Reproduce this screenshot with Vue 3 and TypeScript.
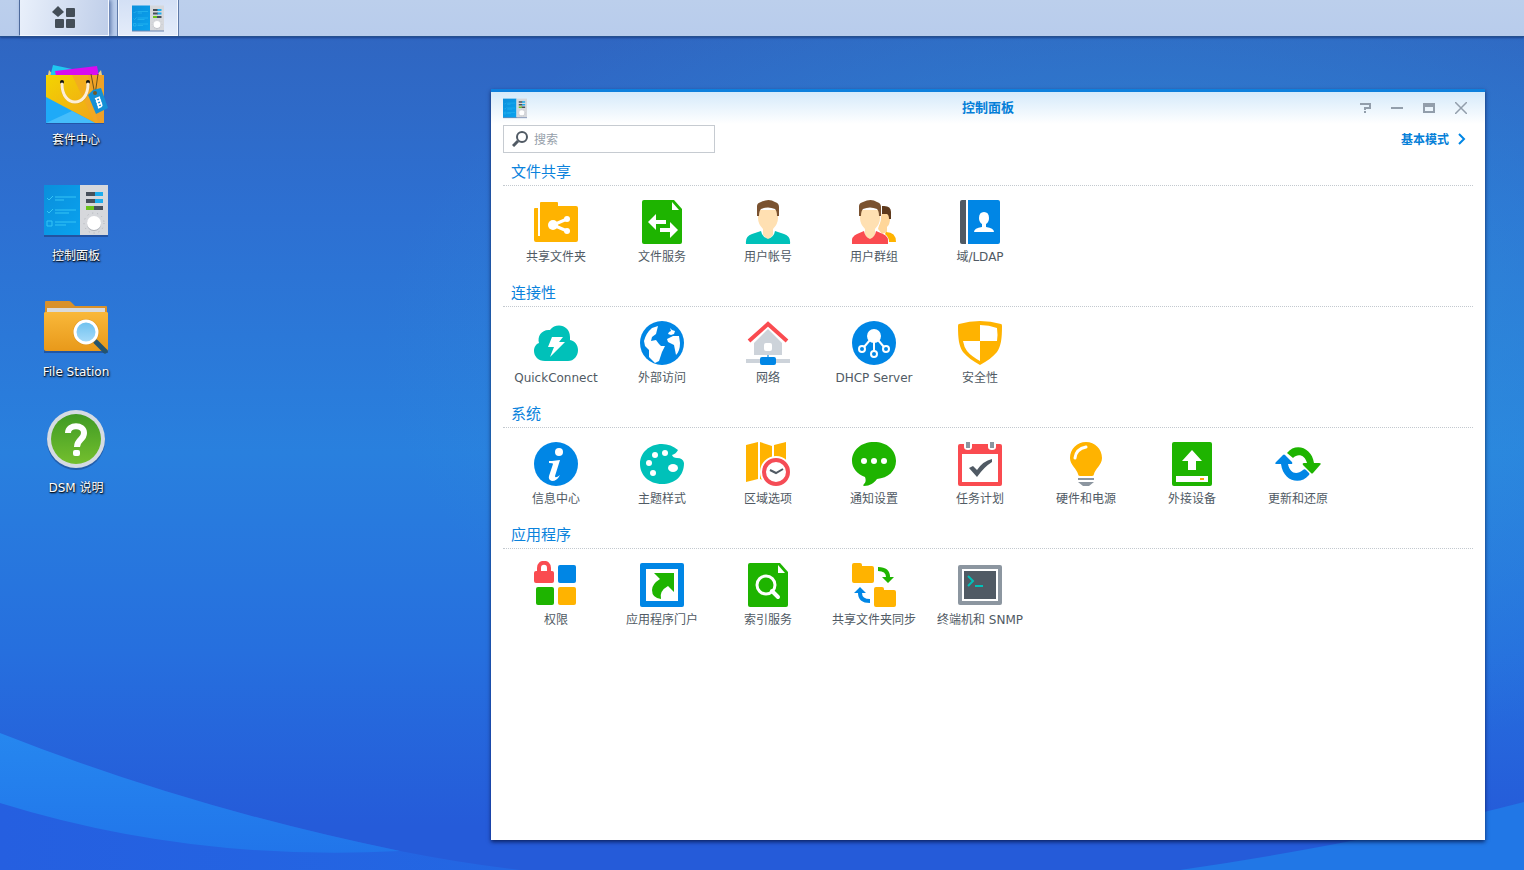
<script setup lang="ts">
import { ref } from 'vue'

interface Entry {
  icon: string
  label: string
}

interface Section {
  title: string
  items: Entry[]
}

const query = ref('')

const shortcuts: Entry[] = [
  { icon: 'bag', label: '套件中心' },
  { icon: 'panel', label: '控制面板' },
  { icon: 'files', label: 'File Station' },
  { icon: 'help', label: 'DSM 说明' },
]

const sections: Section[] = [
  {
    title: '文件共享',
    items: [
      { icon: 'share', label: '共享文件夹' },
      { icon: 'fileservice', label: '文件服务' },
      { icon: 'user', label: '用户帐号' },
      { icon: 'group', label: '用户群组' },
      { icon: 'ldap', label: '域/LDAP' },
    ],
  },
  {
    title: '连接性',
    items: [
      { icon: 'quickconnect', label: 'QuickConnect' },
      { icon: 'globe', label: '外部访问' },
      { icon: 'network', label: '网络' },
      { icon: 'dhcp', label: 'DHCP Server' },
      { icon: 'shield', label: '安全性' },
    ],
  },
  {
    title: '系统',
    items: [
      { icon: 'info', label: '信息中心' },
      { icon: 'palette', label: '主题样式' },
      { icon: 'region', label: '区域选项' },
      { icon: 'chat', label: '通知设置' },
      { icon: 'calendar', label: '任务计划' },
      { icon: 'bulb', label: '硬件和电源' },
      { icon: 'external', label: '外接设备' },
      { icon: 'update', label: '更新和还原' },
    ],
  },
  {
    title: '应用程序',
    items: [
      { icon: 'privilege', label: '权限' },
      { icon: 'portal', label: '应用程序门户' },
      { icon: 'index', label: '索引服务' },
      { icon: 'sync', label: '共享文件夹同步' },
      { icon: 'terminal', label: '终端机和 SNMP' },
    ],
  },
]
</script>

<template>
  <div class="desktop">
    <svg class="sprite" aria-hidden="true">
      <defs>
        <linearGradient id="g-bag" x1="0" y1="0" x2="1" y2="1">
          <stop offset="0" stop-color="#f3d400" />
          <stop offset="1" stop-color="#f0a01c" />
        </linearGradient>
        <linearGradient id="g-folder" x1="0" y1="0" x2="0" y2="1">
          <stop offset="0" stop-color="#f9b83a" />
          <stop offset="1" stop-color="#e8991a" />
        </linearGradient>
        <linearGradient id="g-lens" x1="0" y1="0" x2="0" y2="1">
          <stop offset="0" stop-color="#6cc0ee" />
          <stop offset="1" stop-color="#a9dcfa" />
        </linearGradient>
        <linearGradient id="g-help" x1="0" y1="0" x2="0" y2="1">
          <stop offset="0" stop-color="#3f9a24" />
          <stop offset="1" stop-color="#74bf2e" />
        </linearGradient>
        <linearGradient id="g-panel" x1="0" y1="0" x2="1" y2="1">
          <stop offset="0" stop-color="#0a8fdc" />
          <stop offset="1" stop-color="#0aa2ee" />
        </linearGradient>
      </defs>

      <symbol id="i-bag" viewBox="0 0 64 64">
        <path d="M4 13l1-5 4 5zM53 13l4-5 1 5z" fill="#e9cf86" />
        <path d="M9 3l19 4 8 8H6z" fill="#1fc8f0" />
        <path d="M11 9l42-5 2 10H12z" fill="#d80cf0" />
        <rect x="2" y="60" width="58" height="2" fill="#1a3f86" opacity=".5" />
        <path d="M2 13h58v48H2z" fill="url(#g-bag)" />
        <path d="M28 13h32v48h-9z" fill="#f2a725" opacity=".75" />
        <path d="M44 13h16v48h-6z" fill="#ee9d2c" opacity=".6" />
        <path d="M2 35l49 26H2z" fill="#1eaaf8" />
        <path d="M2 61l26-12 23 12z" fill="#45bdfb" />
        <circle cx="18" cy="20" r="2" fill="#111" />
        <circle cx="44" cy="20" r="2" fill="#111" />
        <path d="M18 23c0 22 26 24 26 0" fill="none" stroke="#b98314" stroke-width="3" opacity=".5" />
        <path d="M18 22c0 24 26 24 26 0" fill="none" stroke="#fdeed6" stroke-width="3" stroke-linecap="round" />
        <path d="M47 12l4 21M54 12l-3 21" fill="none" stroke="#69531c" />
        <path d="M44 33l5-5 8-2 7 20-12 6z" fill="#1590d6" />
        <circle cx="51" cy="31" r="2" fill="#725a2a" />
        <path d="M51 37l5-2M52 40l5-2M53 43l5-2M54 46l4-2M52 36l3 10M55 35l3 9" stroke="#fff" stroke-width="1.5" />
      </symbol>

      <symbol id="i-panel" viewBox="0 0 64 64">
        <rect y="56" width="64" height="3" fill="#1c3f80" opacity=".6" />
        <rect y="7" width="36" height="50" fill="url(#g-panel)" />
        <rect x="36" y="7" width="28" height="50" fill="#d6d8dc" />
        <path d="M3 20l2 2 4-4M3 33l2 2 4-4M3 43h5v5H3zM11 19h21M11 22h9M11 32h21M11 35h14M11 44h21M11 47h11" fill="none" stroke="#35c4f5" />
        <path d="M42 14h10v4H42zM42 21h10v4H42zM49 28h10v4H49z" fill="#47505a" />
        <path d="M51 14h8v4h-8zM51 21h8v4h-8z" fill="#1cacec" />
        <rect x="42" y="28" width="8" height="4" fill="#6cc41b" />
        <circle cx="50" cy="45" r="10" fill="none" stroke="#aeb2b8" stroke-dasharray="1 4" />
        <circle cx="50" cy="46" r="7" fill="#aaaeb5" />
        <circle cx="50" cy="45" r="7" fill="#fff" />
      </symbol>

      <symbol id="i-files" viewBox="0 0 64 64">
        <rect y="56" width="64" height="3" fill="#1c3f80" opacity=".6" />
        <path d="M1 8q0-1 1-1h23q1 0 2 1l4 4h31q1 0 1 1v20H1z" fill="#d9912a" />
        <path d="M3 14h58v6H3z" fill="#eef0f2" />
        <path d="M3 15h58M3 17h58" stroke="#c4c4c4" />
        <path d="M0 19q0-1 2-1h60q2 0 2 1v36q0 2-2 2H2q-2 0-2-2z" fill="url(#g-folder)" />
        <path d="M52 48l9 9" stroke="#24546f" stroke-width="5" stroke-linecap="round" />
        <circle cx="42" cy="38" r="13" fill="#cf8a1b" opacity=".5" />
        <circle cx="42" cy="38" r="11" fill="url(#g-lens)" stroke="#fff" stroke-width="3" />
      </symbol>

      <symbol id="i-help" viewBox="0 0 64 64">
        <circle cx="32" cy="31" r="29" fill="#1b3d7c" opacity=".5" />
        <circle cx="32" cy="29" r="29" fill="#d5dbe3" />
        <circle cx="32" cy="29" r="25" fill="url(#g-help)" />
        <path d="M24 23c0-9 16-9 16 0 0 7-7 6-7 14" fill="none" stroke="#fff" stroke-width="6" />
        <rect x="29" y="40" width="7" height="6" rx="2" fill="#fff" />
      </symbol>

      <symbol id="i-share" viewBox="0 0 48 48">
        <path d="M2 11q0-1 1-1h3v28h2V5q0-1 1-1h16q1 0 1 1v3h18q2 0 2 2v32q0 2-2 2H4q-2 0-2-2z" fill="#ffb300" />
        <path d="M35 21l-14 6 14 6" fill="none" stroke="#fff" stroke-width="3" />
        <circle cx="21" cy="27" r="5" fill="#fff" />
        <circle cx="35" cy="21" r="3" fill="#fff" />
        <circle cx="35" cy="33" r="3" fill="#fff" />
      </symbol>

      <symbol id="i-fileservice" viewBox="0 0 48 48">
        <path d="M6 2h30l8 9v33q0 2-2 2H6q-2 0-2-2V4q0-2 2-2z" fill="#1eb400" />
        <path d="M34 4v8h7zM10 24l8-8v6h10v4H18v6zM40 32l-8-8v6H22v4h10v6z" fill="#fff" />
      </symbol>

      <symbol id="i-user" viewBox="0 0 48 48">
        <path d="M14 12h20v8q0 6-5 11v6l-5 5-5-5v-6q-5-5-5-11z" fill="#ffe0b2" />
        <path d="M13 18V8q0-3 4-4 8-4 14 0 4 1 4 5v9h-2q0-5-2-7-7-3-14 0-2 2-2 7z" fill="#7a5230" />
        <path d="M2 46q-1-8 6-10l9-3q1 6 7 8 6-2 7-8l9 3q7 2 6 10z" fill="#00c1b9" />
      </symbol>

      <symbol id="i-group" viewBox="0 0 48 48">
        <path d="M32 15h8v6q0 5-3 8v5l-5 2-4-5z" fill="#ffd699" />
        <path d="M32 8q9-1 9 6v7h-2q0-4-2-5h-5z" fill="#5f3a1c" />
        <path d="M36 34q10 0 10 10h-7q0-5-4-8z" fill="#ffb300" />
        <path d="M10 12h20v8q0 6-5 11v6l-5 5-5-5v-6q-5-5-5-11z" fill="#ffe0b2" stroke="#fff" stroke-width="2" paint-order="stroke" />
        <path d="M9 18V8q0-3 4-4 8-4 14 0 4 1 4 5v9h-2q0-5-2-7-7-3-14 0-2 2-2 7z" fill="#7a5230" />
        <path d="M2 46q-1-8 5-10l7-3q1 6 6 8 5-2 6-8l7 3q6 2 5 10z" fill="#fa4b50" />
      </symbol>

      <symbol id="i-ldap" viewBox="0 0 48 48">
        <path d="M6 2h4v44H6q-2 0-2-2V4q0-2 2-2z" fill="#505a64" />
        <path d="M12 2h30q2 0 2 2v40q0 2-2 2H12z" fill="#0086e5" />
        <path d="M28 14q5 0 5 6 0 4-3 6v3q8 1 8 5H18q0-4 8-5v-3q-3-2-3-6 0-6 5-6z" fill="#fff" />
      </symbol>

      <symbol id="i-quickconnect" viewBox="0 0 48 48">
        <path d="M13 42C6 42 2 37 2 32c0-4 2-7 5-8-2-7 3-14 11-13 6-8 20-5 20 7v3c5 1 8 5 8 10 0 6-4 11-10 11z" fill="#00c1b9" />
        <path d="M20 18h11l-4 5h6L18 38l4-10h-6z" fill="#fff" />
      </symbol>

      <symbol id="i-globe" viewBox="0 0 48 48">
        <circle cx="24" cy="24" r="22" fill="#0086e5" />
        <path d="M20 7l-1 4-1 4-4 3-1 4 5-1 3 4 2 2h4l-3 6-3 9-4 2-6-6v-7l-4-4-1-5q2-8 8-13zM32 9l2 2 3 1-1 3-3 1-3-1 1-2 2-1zM29 20l6-3 6 0 1 7q0 8-4 12l-2-10-6-3zM28 7h2M31 7h2" fill="#fff" />
      </symbol>

      <symbol id="i-network" viewBox="0 0 48 48">
        <path d="M24 10l14 14v12H10V24z" fill="#cdd3da" />
        <path d="M5 22L24 5l19 17" fill="none" stroke="#fa4b50" stroke-width="4" />
        <rect x="20" y="24" width="8" height="8" rx="2" fill="#fff" />
        <path d="M2 40h44v4H2z" fill="#cdd3da" />
        <path d="M23 36h2v3h-2z" fill="#6cb9ef" />
        <rect x="16" y="38" width="16" height="8" rx="2" fill="#0086e5" />
      </symbol>

      <symbol id="i-dhcp" viewBox="0 0 48 48">
        <circle cx="24" cy="24" r="22" fill="#0086e5" />
        <path d="M20 21l-6 7M24 22v10M28 21l6 7" stroke="#fff" stroke-width="2" />
        <circle cx="24" cy="17" r="7" fill="#fff" />
        <g fill="none" stroke="#fff" stroke-width="2">
          <circle cx="12" cy="30" r="3" />
          <circle cx="24" cy="35" r="3" />
          <circle cx="36" cy="30" r="3" />
        </g>
      </symbol>

      <symbol id="i-shield" viewBox="0 0 48 48">
        <path d="M3 5q21-6 42 0 1 0 1 2c0 13-1 20-5 26-4 5-10 9-17 13-7-4-13-8-17-13C3 27 2 20 2 7q0-2 1-2z" fill="#ffb300" />
        <path d="M24 6q9 0 17 3 1 7 0 13H24zM24 22v20q-9-5-13-10-3-4-4-10z" fill="#fff" />
      </symbol>

      <symbol id="i-info" viewBox="0 0 48 48">
        <circle cx="24" cy="24" r="22" fill="#0086e5" />
        <circle cx="27" cy="12" r="4" fill="#fff" />
        <path d="M17 21h3l8-1-5 16q0 3 5-1-3 6-8 6-4-1-3-5l4-12q0-1-4-1z" fill="#fff" />
      </symbol>

      <symbol id="i-palette" viewBox="0 0 48 48">
        <path d="M24 4q9 0 16 6-2 4-6 5 1 3 5 3 6 0 7 5C46 36 37 44 24 44 11 44 2 35 2 24S11 4 24 4z" fill="#00c1b9" />
        <g fill="#fff">
          <circle cx="17" cy="15" r="3" />
          <circle cx="27" cy="13" r="3" />
          <circle cx="11" cy="23" r="3" />
          <circle cx="15" cy="33" r="3" />
          <ellipse cx="35" cy="28" rx="5" ry="4" />
        </g>
      </symbol>

      <symbol id="i-region" viewBox="0 0 48 48">
        <path d="M2 5l12-3v37L2 42zM16 2l12 4v37l-12-4zM30 5l12-3v36l-12 4z" fill="#ffb300" />
        <circle cx="32" cy="32" r="16" fill="#fff" />
        <circle cx="32" cy="32" r="12" fill="#fff" stroke="#f54c56" stroke-width="4" />
        <path d="M26 30l6 3 7-4" fill="none" stroke="#505a64" stroke-width="2" />
      </symbol>

      <symbol id="i-chat" viewBox="0 0 48 48">
        <path d="M24 2c13 0 22 8 22 19 0 10-8 17-19 18-3 4-7 7-13 7-1 0-1-1 0-2 2-2 2-4 1-7C7 34 2 28 2 21 2 10 11 2 24 2z" fill="#1eb400" />
        <g fill="#fff">
          <circle cx="14" cy="21" r="3" />
          <circle cx="24" cy="21" r="3" />
          <circle cx="34" cy="21" r="3" />
        </g>
      </symbol>

      <symbol id="i-calendar" viewBox="0 0 48 48">
        <rect x="2" y="4" width="44" height="42" rx="2" fill="#fa4b50" />
        <path d="M6 14h36v28H6zM8 2h8v5q0 3-4 3t-4-3zM32 2h8v5q0 3-4 3t-4-3z" fill="#fff" />
        <path d="M10 2h4v6h-4zM34 2h4v6h-4z" fill="#8c96a0" />
        <path d="M13 28l4-2 4 4q6-9 15-11v3q-8 5-15 15z" fill="#505a64" />
      </symbol>

      <symbol id="i-bulb" viewBox="0 0 48 48">
        <path d="M24 2c9 0 16 7 16 16 0 7-7 11-8 16q0 2-2 2H18q-2 0-2-2C15 29 8 25 8 18 8 9 15 2 24 2z" fill="#ffb300" />
        <path d="M13 18q1-9 11-11" fill="none" stroke="#fff" stroke-width="3" stroke-linecap="round" />
        <path d="M16 38h16v2H16zM16 42h16l-5 4h-6z" fill="#8c96a0" />
      </symbol>

      <symbol id="i-external" viewBox="0 0 48 48">
        <rect x="4" y="2" width="40" height="44" rx="2" fill="#1eb400" />
        <path d="M24 10l10 11h-6v9h-8v-9h-6zM8 36h32v6H8z" fill="#fff" />
        <rect x="32" y="38" width="4" height="2" fill="#ffa800" />
      </symbol>

      <symbol id="i-update" viewBox="0 0 48 48">
        <path d="M13 13C22 2 38 8 40 23h5q3 0 1 2l-7 8q-1 1-2 0l-8-8q-1-2 1-2h3c-2-8-9-10-14-5z" fill="#1eb400" />
        <path d="M35 35C26 46 9 41 7 24H3q-3 0-1-2l7-7q1-1 2 0l7 7q1 2-1 2h-3c2 10 9 11 15 6 1-1 2-1 3 0l3 3q1 1 0 2z" fill="#0086e5" />
      </symbol>

      <symbol id="i-privilege" viewBox="0 0 48 48">
        <path d="M7 12V7c0-7 10-7 10 0v5" fill="none" stroke="#fa4b50" stroke-width="4" />
        <rect x="2" y="10" width="20" height="12" rx="2" fill="#fa4b50" />
        <rect x="26" y="4" width="18" height="18" rx="2" fill="#0086e5" />
        <rect x="4" y="26" width="18" height="18" rx="2" fill="#1eb400" />
        <rect x="26" y="26" width="18" height="18" rx="2" fill="#ffb300" />
      </symbol>

      <symbol id="i-portal" viewBox="0 0 48 48">
        <rect x="2" y="2" width="44" height="44" rx="2" fill="#0086e5" />
        <path d="M8 8h32v32H8z" fill="#fff" />
        <path d="M16 12h20v19l-6-6q-9 5-7 13-9-1-9-9 0-6 8-11z" fill="#1eb400" />
      </symbol>

      <symbol id="i-index" viewBox="0 0 48 48">
        <path d="M6 2h30l8 9v33q0 2-2 2H6q-2 0-2-2V4q0-2 2-2z" fill="#1eb400" />
        <path d="M34 4v8h7z" fill="#fff" />
        <circle cx="22" cy="24" r="9" fill="none" stroke="#fff" stroke-width="3" />
        <path d="M28 30l6 6" stroke="#fff" stroke-width="4" stroke-linecap="round" />
      </symbol>

      <symbol id="i-sync" viewBox="0 0 48 48">
        <path d="M2 4q0-2 2-2h6q2 0 2 2v1h10q2 0 2 2v13q0 2-2 2H4q-2 0-2-2zM24 28q0-2 2-2h6q2 0 2 2v1h10q2 0 2 2v13q0 2-2 2H26q-2 0-2-2z" fill="#ffb300" />
        <path d="M28 6q12 0 12 10h4l-6 6-6-6h4q0-6-8-6z" fill="#1eb400" />
        <path d="M20 42q-12 0-12-10H4l6-6 6 6h-4q0 6 8 6z" fill="#0086e5" />
      </symbol>

      <symbol id="i-terminal" viewBox="0 0 48 48">
        <rect x="2" y="4" width="44" height="40" rx="2" fill="#8c96a0" />
        <path d="M6 8h36v32H6z" fill="#fff" />
        <path d="M8 10h32v28H8z" fill="#505a64" />
        <path d="M12 15l5 5-5 5M19 25h8" fill="none" stroke="#00c1b9" stroke-width="2" />
      </symbol>
    </svg>

    <svg class="wallpaper" viewBox="0 0 1524 870" preserveAspectRatio="none" aria-hidden="true">
      <defs>
        <linearGradient id="sky" x1="0" y1="0" x2="0" y2="1">
          <stop offset="0" stop-color="#3064be" />
          <stop offset=".25" stop-color="#2d70d2" />
          <stop offset=".52" stop-color="#2980de" />
          <stop offset=".75" stop-color="#266fde" />
          <stop offset=".95" stop-color="#255bd9" />
        </linearGradient>
        <radialGradient id="glow" cx=".75" cy=".4" r=".5">
          <stop offset="0" stop-color="#2f9bdc" stop-opacity=".6" />
          <stop offset="1" stop-color="#2f9bdc" stop-opacity="0" />
        </radialGradient>
        <linearGradient id="wave" x1="0" y1="0" x2="0" y2="1">
          <stop offset="0" stop-color="#2687ef" />
          <stop offset="1" stop-color="#2175ea" />
        </linearGradient>
        <linearGradient id="base" x1="0" y1="0" x2="1" y2="0">
          <stop offset="0" stop-color="#255fe0" />
          <stop offset="1" stop-color="#2367e3" />
        </linearGradient>
      </defs>
      <rect width="1524" height="870" fill="url(#sky)" />
      <rect width="1524" height="870" fill="url(#glow)" />
      <path d="M0 733Q190 808 400 851Q460 863 520 870H0z" fill="url(#base)" />
      <path d="M0 733Q190 808 400 851Q190 862 0 803z" fill="url(#wave)" />
      <path d="M1180 870Q1370 842 1524 802V870z" fill="#2177e6" />
    </svg>

    <header class="taskbar">
      <button class="task menu" type="button" aria-label="主菜单">
        <svg width="24" height="24" viewBox="0 0 24 24" fill="#444e58">
          <path d="M6 0l6 6-6 5-6-5z" />
          <rect x="14" y="2" width="9" height="9" rx="1" />
          <rect x="3" y="13" width="9" height="9" rx="1" />
          <rect x="14" y="13" width="9" height="9" rx="1" />
        </svg>
      </button>
      <button class="task app" type="button" aria-label="控制面板">
        <svg width="32" height="32"><use href="#i-panel" /></svg>
      </button>
    </header>

    <nav class="shortcuts">
      <button v-for="s in shortcuts" :key="s.icon" class="shortcut" type="button">
        <svg width="64" height="64"><use :href="'#i-' + s.icon" /></svg>
        <span>{{ s.label }}</span>
      </button>
    </nav>

    <main class="window">
      <div class="titlebar">
        <svg width="24" height="24"><use href="#i-panel" /></svg>
        <h1>控制面板</h1>
        <div class="controls">
          <button type="button" aria-label="帮助">
            <svg viewBox="0 0 12 12"><path d="M1 2h10v4H6v2M6 9v2" /></svg>
          </button>
          <button type="button" aria-label="最小化">
            <svg viewBox="0 0 12 12"><path d="M0 6h12" /></svg>
          </button>
          <button type="button" aria-label="最大化">
            <svg viewBox="0 0 12 12">
              <path class="solid" fill-rule="evenodd" d="M0 1h12v10H0zM2 5v4h8V5z" />
            </svg>
          </button>
          <button type="button" aria-label="关闭">
            <svg class="thin" viewBox="0 0 12 12"><path d="M0 0l12 12M12 0L0 12" /></svg>
          </button>
        </div>
      </div>

      <div class="toolbar">
        <label class="search">
          <svg width="16" height="16" viewBox="0 0 16 16" aria-hidden="true">
            <circle cx="10" cy="6" r="5" fill="none" stroke="#505a64" stroke-width="2" />
            <path d="M6 10l-5 5" stroke="#505a64" stroke-width="3" />
          </svg>
          <input v-model="query" type="text" placeholder="搜索" aria-label="搜索" />
        </label>
        <a class="mode" href="#">
          基本模式
          <svg width="8" height="12" viewBox="0 0 8 12" aria-hidden="true">
            <path d="M1 1l5 5-5 5" fill="none" stroke="#0086e5" stroke-width="2" />
          </svg>
        </a>
      </div>

      <section v-for="sec in sections" :key="sec.title">
        <h2>{{ sec.title }}</h2>
        <div class="items">
          <button v-for="it in sec.items" :key="it.icon" class="item" type="button">
            <svg width="48" height="48"><use :href="'#i-' + it.icon" /></svg>
            <span>{{ it.label }}</span>
          </button>
        </div>
      </section>
    </main>
  </div>
</template>

<style>
html,
body {
  margin: 0;
  height: 100%;
  overflow: hidden;
}
</style>

<style scoped>
.desktop {
  position: relative;
  height: 100vh;
  overflow: hidden;
  background: #2b70d4;
  font-family: 'DejaVu Sans', 'Noto Sans CJK SC', sans-serif;
  font-size: 12px;
}

button {
  margin: 0;
  padding: 0;
  border: 0;
  background: none;
  font: inherit;
  color: inherit;
  cursor: pointer;
}

svg {
  display: block;
}

.sprite {
  position: absolute;
  width: 0;
  height: 0;
}

.wallpaper {
  position: absolute;
  inset: 0;
  width: 100%;
  height: 100%;
}

.taskbar {
  position: relative;
  display: flex;
  gap: 9px;
  box-sizing: border-box;
  height: 37px;
  padding-left: 19px;
  background: linear-gradient(#bccfec, #b8ccec);
  border-bottom: 1px solid #24508f;
  box-shadow: 0 1px 2px rgba(10, 30, 90, 0.5);
}

.task {
  display: flex;
  align-items: center;
  justify-content: center;
  box-sizing: border-box;
  border: 1px solid #f4f8ff;
  border-top: 0;
  background: linear-gradient(100deg, #e9f0fb, #bfcee9);
}

.task.menu {
  width: 90px;
  border-left-color: #4d6a9c;
  box-shadow: 2px 0 4px rgba(50, 80, 140, 0.7);
}

.task.app {
  width: 60px;
  background: linear-gradient(#d3e0f5, #e4ecfa);
  box-shadow: 1px 0 #5f7aa8, -1px 0 #5f7aa8;
}

.shortcuts {
  position: relative;
  display: flex;
  flex-direction: column;
  gap: 28px;
  width: 152px;
  padding-top: 25px;
}

.shortcut {
  display: flex;
  flex-direction: column;
  align-items: center;
  gap: 4px;
  color: #fff;
  line-height: 20px;
  text-shadow: 1px 1px 2px #000, 0 1px 1px rgba(0, 0, 0, 0.7);
}

.window {
  position: absolute;
  top: 89px;
  right: 39px;
  bottom: 30px;
  left: 491px;
  box-sizing: border-box;
  padding: 0 12px;
  border-top: 3px solid #0d80dd;
  background: linear-gradient(#d5eafa, #fff 32px);
  box-shadow: 0 2px 4px rgba(0, 10, 50, 0.7);
}

.titlebar {
  display: grid;
  grid-template-columns: 1fr auto 1fr;
  align-items: center;
  height: 32px;
}

h1 {
  margin: 0;
  font-size: 13px;
  line-height: 20px;
  font-weight: 700;
  color: #057fd8;
}

.controls {
  display: flex;
  justify-content: flex-end;
  gap: 20px;
  padding-right: 6px;
}

.controls svg {
  width: 12px;
  height: 12px;
  fill: none;
  stroke: #929eab;
  stroke-width: 2;
}

.controls .thin {
  stroke-width: 1.5;
}

.controls .solid {
  fill: #929eab;
  stroke: none;
}

.toolbar {
  display: flex;
  align-items: center;
  justify-content: space-between;
  padding-top: 1px;
}

.search {
  display: flex;
  align-items: center;
  gap: 6px;
  box-sizing: border-box;
  width: 212px;
  height: 28px;
  padding: 0 8px;
  border: 1px solid #c6cbd1;
  background: #fff;
}

.search input {
  flex: 1;
  min-width: 0;
  padding: 2px 0 0;
  border: 0;
  outline: 0;
  background: none;
  font: inherit;
  color: #505a64;
}

.search input::placeholder {
  color: #96a0aa;
  opacity: 1;
}

.mode {
  display: flex;
  align-items: center;
  gap: 9px;
  padding-right: 7px;
  padding-bottom: 1px;
  font-weight: 700;
  color: #0580d8;
  text-decoration: none;
}

section {
  padding-bottom: 10px;
}

.toolbar + section {
  padding-top: 4px;
}

h2 {
  margin: 0;
  padding: 2px 8px 0;
  border-bottom: 1px dotted #c3c9cf;
  font-size: 15px;
  line-height: 26px;
  font-weight: 400;
  color: #0a82dc;
}

.items {
  display: flex;
  flex-wrap: wrap;
  padding-top: 12px;
}

.item {
  display: flex;
  flex-direction: column;
  align-items: center;
  width: 106px;
  line-height: 22px;
  color: #505a64;
  white-space: nowrap;
}
</style>
